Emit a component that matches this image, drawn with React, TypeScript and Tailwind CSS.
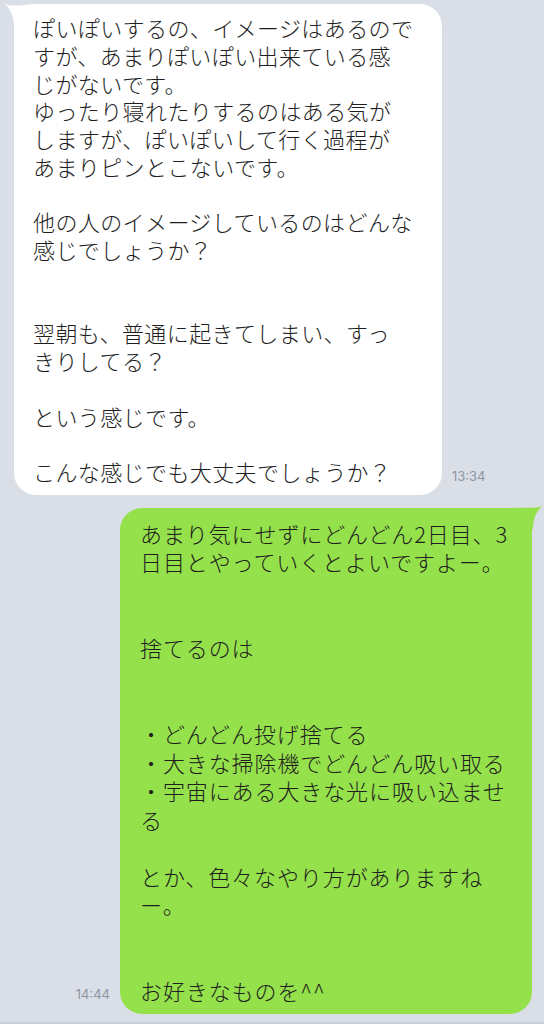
import React from "react";

const incoming = `ぽいぽいするの、イメージはあるので
すが、あまりぽいぽい出来ている感
じがないです。
ゆったり寝れたりするのはある気が
しますが、ぽいぽいして行く過程が
あまりピンとこないです。

他の人のイメージしているのはどんな
感じでしょうか？


翌朝も、普通に起きてしまい、すっ
きりしてる？

という感じです。

こんな感じでも大丈夫でしょうか？`;

const outgoing = `あまり気にせずにどんどん2日目、3
日目とやっていくとよいですよー。


捨てるのは


・どんどん投げ捨てる
・大きな掃除機でどんどん吸い取る
・宇宙にある大きな光に吸い込ませ
る

とか、色々なやり方がありますね
ー。


お好きなものを^^`;

const jp = { fontFamily: '"Noto Sans CJK JP", "Noto Sans", sans-serif' };

function LeftTail() {
	return (
		<svg
			className="absolute left-[-9px] top-[-1px]"
			width="30"
			height="24"
			viewBox="0 0 30 24">
			<path d="M0 1 C 8 4, 16 2, 30 1 L 30 24 L 9 24 C 9 14, 6 7, 0 1 Z" fill="#ffffff" />
		</svg>
	);
}

function RightTail() {
	return (
		<svg
			className="absolute right-[-10px] top-[-3px]"
			width="30"
			height="24"
			viewBox="0 0 30 24">
			<path d="M30 1 C 22 4, 14 2, 0 3 L 0 24 L 21 24 C 21 14, 24 7, 30 1 Z" fill="#95e14b" />
		</svg>
	);
}

export default function App() {
	return (
		<div className="w-[544px] h-[1024px] overflow-hidden bg-[#d9dee7] flex flex-col">
			<div className="flex items-end gap-[10px] pl-[14px] pt-[4px]">
				<div className="relative w-[428px] bg-white rounded-[22px] pl-[19px] pt-[10px] pb-[9px]">
					<LeftTail />
					<div
						style={jp}
						className="relative whitespace-pre text-[22px] leading-[27.75px] tracking-[0.4px] font-light text-[#1e1e1e]">
						{incoming}
					</div>
				</div>
				<span className="mb-[8px] text-[13px] text-[#8e96a4] font-['Inter',sans-serif]">
					13:34
				</span>
			</div>

			<div className="flex items-end justify-end gap-[10px] pr-[12px] pt-[13px]">
				<span className="mb-[9px] text-[13px] text-[#8e96a4] font-['Inter',sans-serif]">
					14:44
				</span>
				<div className="relative w-[412px] bg-[#95e14b] rounded-[22px] pl-[20px] pt-[11px] pb-[9px]">
					<RightTail />
					<div
						style={jp}
						className="relative whitespace-pre text-[22px] leading-[28.6px] tracking-[0.9px] font-light text-[#1e1e1e]">
						{outgoing}
					</div>
				</div>
			</div>

			<div className="mt-auto h-[2px] bg-[#c9ced6]" />
		</div>
	);
}
